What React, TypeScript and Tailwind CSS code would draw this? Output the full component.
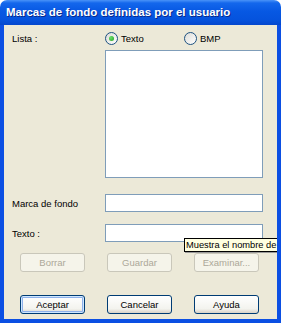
import React from 'react'

// XP style radio button
const Radio = ({ checked, label, className = '' }: { checked?: boolean; label: string; className?: string }) => (
  <div className={`flex items-center ${className}`}>
    <div className="w-[13px] h-[13px] rounded-full border border-[#1C5180] bg-[linear-gradient(135deg,#DCDCD7,#FFFFFF)] flex items-center justify-center shrink-0">
      {checked && <div className="w-[5px] h-[5px] rounded-full bg-[radial-gradient(circle_at_35%_35%,#6BE06A,#21A121)]" />}
    </div>
    <span className="ml-[3px]">{label}</span>
  </div>
)

const XpButton = ({ label, disabled, isDefault }: { label: string; disabled?: boolean; isDefault?: boolean }) => (
  <button
    className={
      disabled
        ? 'w-[65px] h-[19px] rounded-[3px] border border-[#C9C7BA] bg-[#F5F4EA] text-[#ACA899] flex items-center justify-center'
        : `w-[65px] h-[19px] rounded-[3px] border border-[#003C74] bg-[linear-gradient(to_bottom,#FFFFFF,#F3F3EE_75%,#D8D3C8)] text-black flex items-center justify-center ${
            isDefault ? 'shadow-[inset_0_0_0_1px_#CEE7FF,inset_0_0_0_2px_#8FB1EA]' : ''
          }`
    }
  >
    {label}
  </button>
)

export default function App() {
  return (
    <div className="w-[281px] h-[323px] flex flex-col bg-white font-['Liberation_Sans',Arial,sans-serif]">
      {/* Title bar */}
      <div className="h-[25px] shrink-0 rounded-t-[7px] bg-[linear-gradient(to_bottom,#4A93F8_0%,#1467EC_12%,#0758E3_45%,#0553DD_80%,#0447CD_100%)] flex items-center pl-[6px] pt-[1px]">
        <span className="text-white font-bold text-[11.5px] [text-shadow:1px_1px_0_#0A2A8A]">
          Marcas de fondo definidas por el usuario
        </span>
      </div>

      {/* Client area */}
      <div className="relative flex-1 flex flex-col border-x-4 border-b-4 border-[#0B4FE3] bg-[#ECE9D8] overflow-hidden text-[9.5px] leading-[13px] text-black">
        <div className="flex items-center h-[13px] mt-[7px] pl-[8px]">
          <span className="w-[93px]">Lista :</span>
          <Radio checked label="Texto" className="w-[79px]" />
          <Radio label="BMP" />
        </div>

        <div className="ml-[101px] mt-[5px] w-[158px] h-[128px] border border-[#7F9DB9] bg-white" />

        <div className="flex items-center mt-[16px] pl-[8px]">
          <span className="w-[93px]">Marca de fondo</span>
          <div className="w-[158px] h-[18px] border border-[#7F9DB9] bg-white" />
        </div>

        <div className="flex items-center mt-[12px] pl-[8px]">
          <span className="w-[93px]">Texto :</span>
          <div className="w-[158px] h-[18px] border border-[#7F9DB9] bg-white" />
        </div>

        <div className="flex gap-[22px] mt-[11px] pl-[16px]">
          <XpButton label="Borrar" disabled />
          <XpButton label="Guardar" disabled />
          <XpButton label="Examinar..." disabled />
        </div>

        <div className="flex gap-[22px] mt-[23px] pl-[16px]">
          <XpButton label="Aceptar" isDefault />
          <XpButton label="Cancelar" />
          <XpButton label="Ayuda" />
        </div>

        {/* Tooltip, running past the window edge */}
        <div className="absolute left-[180px] -right-[2px] top-[213px] h-[14px] border border-black bg-[#FFFFE1] pl-[1px] whitespace-nowrap flex items-center text-[9.3px] shadow-[1px_1px_0_#9A9A9A]">
          Muestra el nombre de
        </div>
      </div>
    </div>
  )
}
